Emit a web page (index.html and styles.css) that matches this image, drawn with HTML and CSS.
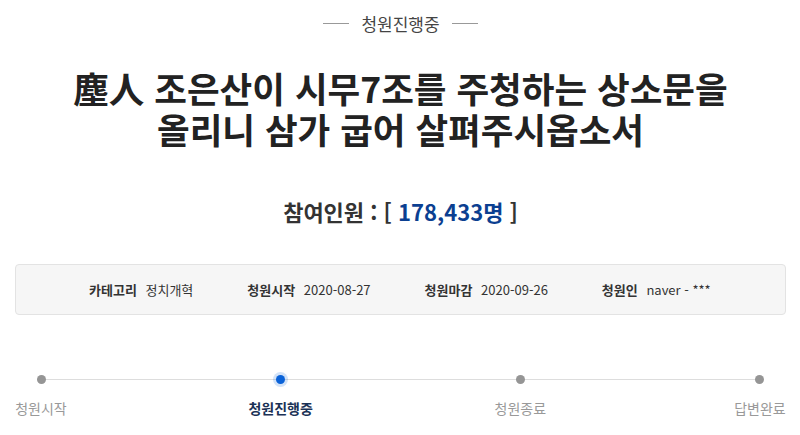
FILE: index.html
```html
<!DOCTYPE html>
<html lang="ko">
<head>
<meta charset="UTF-8">
<meta name="viewport" content="width=device-width, initial-scale=1.0">
<title>청원진행중</title>
<link rel="stylesheet" href="styles.css">
</head>
<body>
<div class="petition">
  <div class="status-label"><span>청원진행중</span></div>
  <h1 class="title">塵人 조은산이 시무7조를 주청하는 상소문을<br>올리니 삼가 굽어 살펴주시옵소서</h1>
  <h2 class="count">참여인원 : [ <span class="num">178,433명</span> ]</h2>

  <ul class="info">
    <li><strong>카테고리</strong> 정치개혁</li>
    <li><strong>청원시작</strong> 2020-08-27</li>
    <li><strong>청원마감</strong> 2020-09-26</li>
    <li><strong>청원인</strong> naver - ***</li>
  </ul>

  <ol class="steps">
    <li><i class="dot"></i><span>청원시작</span></li>
    <li class="on"><i class="dot"></i><span>청원진행중</span></li>
    <li><i class="dot"></i><span>청원종료</span></li>
    <li><i class="dot"></i><span>답변완료</span></li>
  </ol>
</div>
</body>
</html>
```

FILE: styles.css
```css
body {
  font-family: 'Noto Sans CJK KR', 'Noto Sans', sans-serif;
  background: #fff;
  color: #333;
  margin: 0;
}
.petition {
  padding: 10px 14px 0 15px;
}
.status-label {
  display: flex;
  justify-content: center;
  align-items: center;
  gap: 12px;
  font-size: 17px;
  color: #444;
  height: 26px;
}
.status-label::before,
.status-label::after {
  content: "";
  width: 26px;
  height: 1px;
  background: #999;
}
.title {
  margin: 31px 0 0;
  text-align: center;
  font-size: 35.5px;
  line-height: 41px;
  font-weight: 700;
  color: #222;
}
.count {
  margin: 47px 0 0;
  text-align: center;
  font-size: 22px;
  line-height: 30px;
  font-weight: 700;
  color: #333;
}
.count .num {
  color: #0b3f91;
}
.info {
  list-style: none;
  margin: 38px 0 0;
  padding: 0 0 0 73px;
  height: 49px;
  display: flex;
  align-items: center;
  gap: 54px;
  background: #f6f6f6;
  border: 1px solid #e3e3e3;
  border-radius: 4px;
  font-size: 13px;
  color: #333;
}
.info strong {
  font-weight: 700;
  margin-right: 5px;
}
.steps {
  list-style: none;
  margin: 59px 0 0;
  padding: 0;
  display: flex;
  justify-content: space-between;
  background: linear-gradient(#ddd, #ddd) no-repeat;
  background-size: calc(100% - 52px) 1px;
  background-position: 26px 5px;
}
.steps li {
  width: 52px;
  display: flex;
  flex-direction: column;
  align-items: center;
}
.dot {
  width: 9px;
  height: 9px;
  border-radius: 50%;
  background: #959595;
  margin-top: 1px;
}
.steps span {
  margin-top: 14px;
  font-size: 14px;
  color: #999;
  white-space: nowrap;
}
.steps .on .dot {
  background: #0a62d8;
  box-shadow: 0 0 0 3px rgba(10, 98, 216, 0.18);
}
.steps .on span {
  color: #1b3256;
  font-weight: 700;
}
```
